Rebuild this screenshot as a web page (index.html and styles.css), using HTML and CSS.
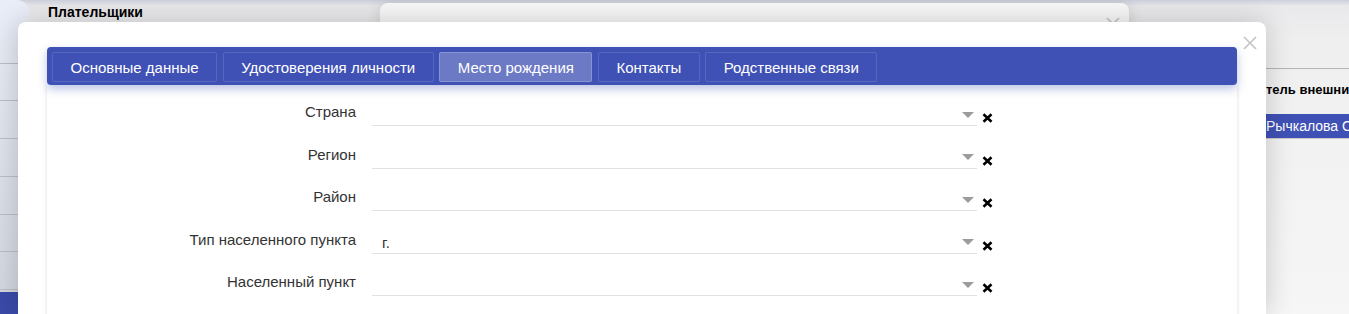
FILE: index.html
```html
<!DOCTYPE html>
<html>
<head>
    <link rel="stylesheet" href="styles.css">
</head>
<body>
    <div class="page">
        <aside class="sidebar">
            <div class="side-item"></div>
            <div class="side-item"></div>
            <div class="side-item"></div>
            <div class="side-item"></div>
            <div class="side-item"></div>
            <div class="side-item"></div>
            <div class="side-item"></div>
            <div class="side-item active"></div>
        </aside>
        <main class="main">
            <h1 class="page-title">Плательщики</h1>
            <div class="grid-peek">
                <div class="grid-head">тель внешни</div>
                <div class="grid-row selected">Рычкалова О</div>
            </div>
        </main>
    </div>

    <div class="dialog dialog-back">
        <button class="dialog-close" title="Закрыть">
            <svg width="16" height="16" viewBox="0 0 16 16"><path d="M2 2L14 14M14 2L2 14" /></svg>
        </button>
    </div>

    <div class="dialog dialog-front">
        <button class="dialog-close" title="Закрыть">
            <svg width="16" height="16" viewBox="0 0 16 16"><path d="M2 2L14 14M14 2L2 14" /></svg>
        </button>

        <div class="tabs">
            <button class="tab">Основные данные</button>
            <button class="tab">Удостоверения личности</button>
            <button class="tab active">Место рождения</button>
            <button class="tab">Контакты</button>
            <button class="tab">Родственные связи</button>
        </div>

        <div class="tab-panel">
            <div class="form-row">
                <label class="form-label">Страна</label>
                <div class="combo"><span class="combo-value"></span><span class="combo-arrow"></span></div>
                <button class="combo-clear"><svg width="11" height="10" viewBox="0 0 11 10"><path d="M1.5 1.3L9.5 8.7M9.5 1.3L1.5 8.7" /></svg></button>
            </div>
            <div class="form-row">
                <label class="form-label">Регион</label>
                <div class="combo"><span class="combo-value"></span><span class="combo-arrow"></span></div>
                <button class="combo-clear"><svg width="11" height="10" viewBox="0 0 11 10"><path d="M1.5 1.3L9.5 8.7M9.5 1.3L1.5 8.7" /></svg></button>
            </div>
            <div class="form-row">
                <label class="form-label">Район</label>
                <div class="combo"><span class="combo-value"></span><span class="combo-arrow"></span></div>
                <button class="combo-clear"><svg width="11" height="10" viewBox="0 0 11 10"><path d="M1.5 1.3L9.5 8.7M9.5 1.3L1.5 8.7" /></svg></button>
            </div>
            <div class="form-row">
                <label class="form-label">Тип населенного пункта</label>
                <div class="combo"><span class="combo-value">г.</span><span class="combo-arrow"></span></div>
                <button class="combo-clear"><svg width="11" height="10" viewBox="0 0 11 10"><path d="M1.5 1.3L9.5 8.7M9.5 1.3L1.5 8.7" /></svg></button>
            </div>
            <div class="form-row">
                <label class="form-label">Населенный пункт</label>
                <div class="combo"><span class="combo-value"></span><span class="combo-arrow"></span></div>
                <button class="combo-clear"><svg width="11" height="10" viewBox="0 0 11 10"><path d="M1.5 1.3L9.5 8.7M9.5 1.3L1.5 8.7" /></svg></button>
            </div>
        </div>
    </div>
</body>
</html>
```

FILE: styles.css
```css
body {
    margin: 0;
    padding: 0;
    height: 314px;
    overflow: hidden;
    position: relative;
    font-family: "Liberation Sans", Arial, sans-serif;
    background: linear-gradient(#cdd0dc 0, #e9e9ec 6px, #efefef 40px, #f6f6f6 100%);
}

/* background page */
.page {
    display: flex;
    height: 314px;
}

.sidebar {
    width: 29px;
    flex-shrink: 0;
    padding-top: 26px;
    border-top-right-radius: 12px;
    background: linear-gradient(#e9eef8, #d2d6de);
    display: flex;
    flex-direction: column;
}

.side-item {
    height: 37px;
    border-bottom: 1px solid #bcbec4;
}

.side-item.active {
    height: 22px;
    margin-top: 2px;
    border-bottom: none;
    background-color: #3a4aa8;
}

.main {
    flex: 1;
    display: flex;
    flex-direction: column;
    padding-left: 19px;
}

.page-title {
    margin: 0;
    font-size: 14px;
    font-weight: bold;
    line-height: 24px;
    color: #000;
}

.grid-peek {
    align-self: flex-end;
    width: 83px;
    margin-top: 44px;
    border-top: 1px solid #b4b4b4;
    overflow: hidden;
    white-space: nowrap;
}

.grid-head {
    height: 45px;
    line-height: 42px;
    font-size: 13px;
    font-weight: bold;
    color: #000;
}

.grid-row {
    height: 24px;
    line-height: 24px;
    font-size: 14px;
    border-bottom: 1px solid #c8c8c8;
}

.grid-row.selected {
    background-color: #3f51b5;
    color: white;
}

/* dialogs */
.dialog {
    position: absolute;
    box-sizing: border-box;
    border-radius: 8px;
}

.dialog-back {
    left: 380px;
    top: 3px;
    width: 749px;
    height: 311px;
    background-color: #f8f8f8;
    box-shadow: 0 0 16px rgba(0, 0, 0, 0.12);
}

.dialog-front {
    left: 18px;
    top: 22px;
    width: 1248px;
    height: 292px;
    padding: 25px 29px 0;
    border-bottom-left-radius: 0;
    border-bottom-right-radius: 0;
    background-color: white;
    box-shadow: 0 0 28px rgba(0, 0, 0, 0.2);
}

.dialog-close {
    position: absolute;
    top: 13px;
    right: 8px;
    width: 16px;
    height: 16px;
    padding: 0;
    border: none;
    background: none;
    cursor: pointer;
}

.dialog-close svg {
    display: block;
    stroke: #c4c4c4;
    stroke-width: 1.7;
}

/* tabs */
.tabs {
    display: flex;
    gap: 5.5px;
    height: 38px;
    box-sizing: border-box;
    padding: 5px;
    border-radius: 4px;
    background-color: #3f51b5;
    box-shadow: 0 4px 10px rgba(63, 81, 181, 0.35);
    position: relative;
    z-index: 1;
}

.tab {
    height: 30px;
    padding: 0 17.5px;
    border: 1px solid rgba(255, 255, 255, 0.13);
    border-radius: 2px;
    background: transparent;
    color: white;
    font-family: "Liberation Sans", Arial, sans-serif;
    font-size: 15px;
    cursor: pointer;
}

.tab.active {
    background-color: rgba(255, 255, 255, 0.24);
    border-color: rgba(255, 255, 255, 0.2);
}

/* form */
.tab-panel {
    height: 240px;
    padding-top: 15px;
    background-color: white;
    box-shadow: 0 1px 4px rgba(0, 0, 0, 0.14);
}

.form-row {
    display: flex;
    align-items: center;
    height: 26px;
    margin-bottom: 16.5px;
}

.form-label {
    align-self: flex-start;
    width: 309px;
    flex-shrink: 0;
    line-height: 23px;
    text-align: right;
    font-size: 15px;
    color: #333;
}

.combo {
    width: 605px;
    height: 26px;
    box-sizing: border-box;
    margin-left: 16px;
    padding: 4px 3px 0 10px;
    display: flex;
    align-items: center;
    border-bottom: 1px solid #e2e2e2;
    font-size: 15px;
    color: #333;
}

.combo-value {
    flex: 1;
}

.combo-arrow {
    width: 0;
    height: 0;
    border-left: 6px solid transparent;
    border-right: 6px solid transparent;
    border-top: 6px solid #9c9c9c;
}

.combo-clear {
    align-self: flex-end;
    width: 11px;
    height: 10px;
    margin: 0 0 3px 5px;
    padding: 0;
    border: none;
    background: none;
    cursor: pointer;
}

.combo-clear svg {
    display: block;
    stroke: #000;
    stroke-width: 2.6;
}
```
